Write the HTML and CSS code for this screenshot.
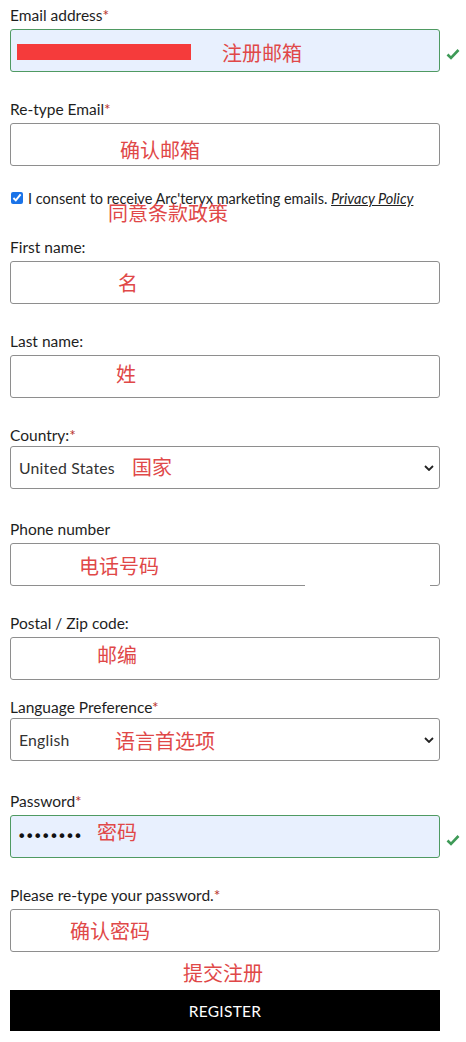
FILE: index.html
```html
<!DOCTYPE html>
<html lang="en">
<head>
<meta charset="utf-8">
<title>Register</title>
<link rel="stylesheet" href="styles.css">
</head>
<body>
<form class="form">
  <div class="field field--first">
    <label class="label">Email address<span class="req">*</span></label>
    <div class="row">
      <div class="control">
        <input class="input input--valid" type="text" value="">
        <span class="redact"></span>
        <span class="note" style="left:212px;top:12px">注册邮箱</span>
      </div>
      <svg class="check" viewBox="0 0 14 12" width="14" height="12"><path d="M1.5 6.5 L5 10 L12.5 2" fill="none" stroke="#3e9a57" stroke-width="2.6"/></svg>
    </div>
  </div>

  <div class="field">
    <label class="label">Re-type Email<span class="req">*</span></label>
    <div class="row">
      <div class="control">
        <input class="input" type="text">
        <span class="note" style="left:110px;top:15px">确认邮箱</span>
      </div>
    </div>
  </div>

  <div class="consent">
    <input class="cb" type="checkbox" checked>
    <span class="consent-text">I consent to receive Arc'teryx marketing emails. <a class="policy">Privacy Policy</a></span>
    <span class="note" style="left:98px;top:13px">同意条款政策</span>
  </div>

  <div class="field field--after-consent">
    <label class="label">First name:</label>
    <div class="row">
      <div class="control">
        <input class="input" type="text">
        <span class="note" style="left:108px;top:10px">名</span>
      </div>
    </div>
  </div>

  <div class="field">
    <label class="label">Last name:</label>
    <div class="row">
      <div class="control">
        <input class="input" type="text">
        <span class="note" style="left:106px;top:7px">姓</span>
      </div>
    </div>
  </div>

  <div class="field field--select">
    <label class="label">Country:<span class="req">*</span></label>
    <div class="row">
      <div class="control">
        <div class="select"><span>United States</span></div>
        <svg class="chev" viewBox="0 0 10 6" width="10" height="6"><path d="M1 1 L5 5 L9 1" fill="none" stroke="#222" stroke-width="1.8"/></svg>
        <span class="note" style="left:122px;top:9px">国家</span>
      </div>
    </div>
  </div>

  <div class="field field--gap30">
    <label class="label">Phone number</label>
    <div class="row">
      <div class="control">
        <input class="input" type="text">
        <span class="smudge"></span>
        <span class="note" style="left:69px;top:11px">电话号码</span>
      </div>
    </div>
  </div>

  <div class="field">
    <label class="label">Postal / Zip code:</label>
    <div class="row">
      <div class="control">
        <input class="input" type="text">
        <span class="note" style="left:87px;top:6px">邮编</span>
      </div>
    </div>
  </div>

  <div class="field field--select field--gap17">
    <label class="label">Language Preference<span class="req">*</span></label>
    <div class="row">
      <div class="control">
        <div class="select"><span>English</span></div>
        <svg class="chev" viewBox="0 0 10 6" width="10" height="6"><path d="M1 1 L5 5 L9 1" fill="none" stroke="#222" stroke-width="1.8"/></svg>
        <span class="note" style="left:105px;top:11px">语言首选项</span>
      </div>
    </div>
  </div>

  <div class="field field--gap30">
    <label class="label">Password<span class="req">*</span></label>
    <div class="row">
      <div class="control">
        <div class="input input--valid input--pw">&#8226;&#8226;&#8226;&#8226;&#8226;&#8226;&#8226;&#8226;</div>
        <span class="note" style="left:87px;top:5px">密码</span>
      </div>
      <svg class="check" viewBox="0 0 14 12" width="14" height="12"><path d="M1.5 6.5 L5 10 L12.5 2" fill="none" stroke="#3e9a57" stroke-width="2.6"/></svg>
    </div>
  </div>

  <div class="field">
    <label class="label">Please re-type your password.<span class="req">*</span></label>
    <div class="row">
      <div class="control">
        <input class="input" type="text">
        <span class="note" style="left:60px;top:10px">确认密码</span>
      </div>
    </div>
  </div>

  <div class="submit">
    <span class="note" style="left:173px;top:-29px">提交注册</span>
    <button class="btn" type="button">REGISTER</button>
  </div>
</form>
</body>
</html>
```

FILE: styles.css
```css
html, body {
  margin: 0;
  padding: 0;
  background: #fff;
}
body {
  font-family: Lato, "Open Sans", Arial, sans-serif;
  color: #222;
}
.form {
  padding: 5px 0 0 10px;
  width: 430px;
}
.field {
  margin-top: 27px;
}
.field--first {
  margin-top: 0;
}
.field--after-consent {
  margin-top: 29px;
}
.field--gap30 { margin-top: 30px; }
.field--gap17 { margin-top: 17px; }

.label {
  display: block;
  font-size: 15.5px;
  line-height: 20px;
  margin-bottom: 4px;
  color: #1e1e1e;
}
.field--select .label {
  margin-bottom: 1px;
}
.req {
  color: #b8352e;
}
.row {
  display: flex;
  align-items: center;
  width: 460px;
}
.control {
  position: relative;
  width: 430px;
  height: 43px;
  flex: none;
}
.input {
  box-sizing: border-box;
  width: 430px;
  height: 43px;
  margin: 0;
  border: 1px solid #8e8e8e;
  border-radius: 3px;
  background: #fff;
  padding: 0 8px;
  font-family: inherit;
  font-size: 15px;
  outline: none;
  display: block;
}
.input--valid {
  border-color: #4f9a62;
  background: #e8f0fe;
}
.input--pw {
  display: flex;
  align-items: center;
  padding-left: 6px;
  font-family: "DejaVu Sans", sans-serif;
  font-size: 16px;
  letter-spacing: -1.4px;
  color: #111;
}
.check {
  margin-left: 6px;
  margin-top: 6px;
  flex: none;
}
.select {
  box-sizing: border-box;
  height: 43px;
  border: 1px solid #8e8e8e;
  border-radius: 3px;
  display: flex;
  align-items: center;
  padding-left: 8px;
  font-size: 15.8px;
  color: #333;
  letter-spacing: 0.2px;
}
.chev {
  position: absolute;
  right: 6px;
  top: 19px;
}
.redact {
  position: absolute;
  left: 7px;
  top: 15px;
  width: 174px;
  height: 16px;
  background: #f53b3b;
}
.smudge {
  position: absolute;
  left: 295px;
  top: 40px;
  width: 125px;
  height: 4px;
  background: #fff;
}
.note {
  position: absolute;
  font-family: "Noto Sans CJK SC", sans-serif;
  font-size: 20px;
  line-height: 24px;
  color: #e04848;
  white-space: nowrap;
  pointer-events: none;
}
.consent {
  position: relative;
  margin-top: 22px;
  height: 20px;
  display: flex;
  align-items: center;
  font-size: 14.5px;
  color: #222;
}
.cb {
  width: 12px;
  height: 12px;
  margin: 0 5px 0 1px;
  accent-color: #1a73e8;
}
.policy {
  font-style: italic;
  text-decoration: underline;
  color: #222;
}
.submit {
  position: relative;
  margin-top: 38px;
}
.btn {
  display: block;
  width: 430px;
  height: 41px;
  border: 0;
  border-radius: 0;
  background: #000;
  color: #fff;
  font-family: inherit;
  font-size: 15.5px;
  letter-spacing: 0.3px;
  margin: 0;
  padding: 0;
}
```
